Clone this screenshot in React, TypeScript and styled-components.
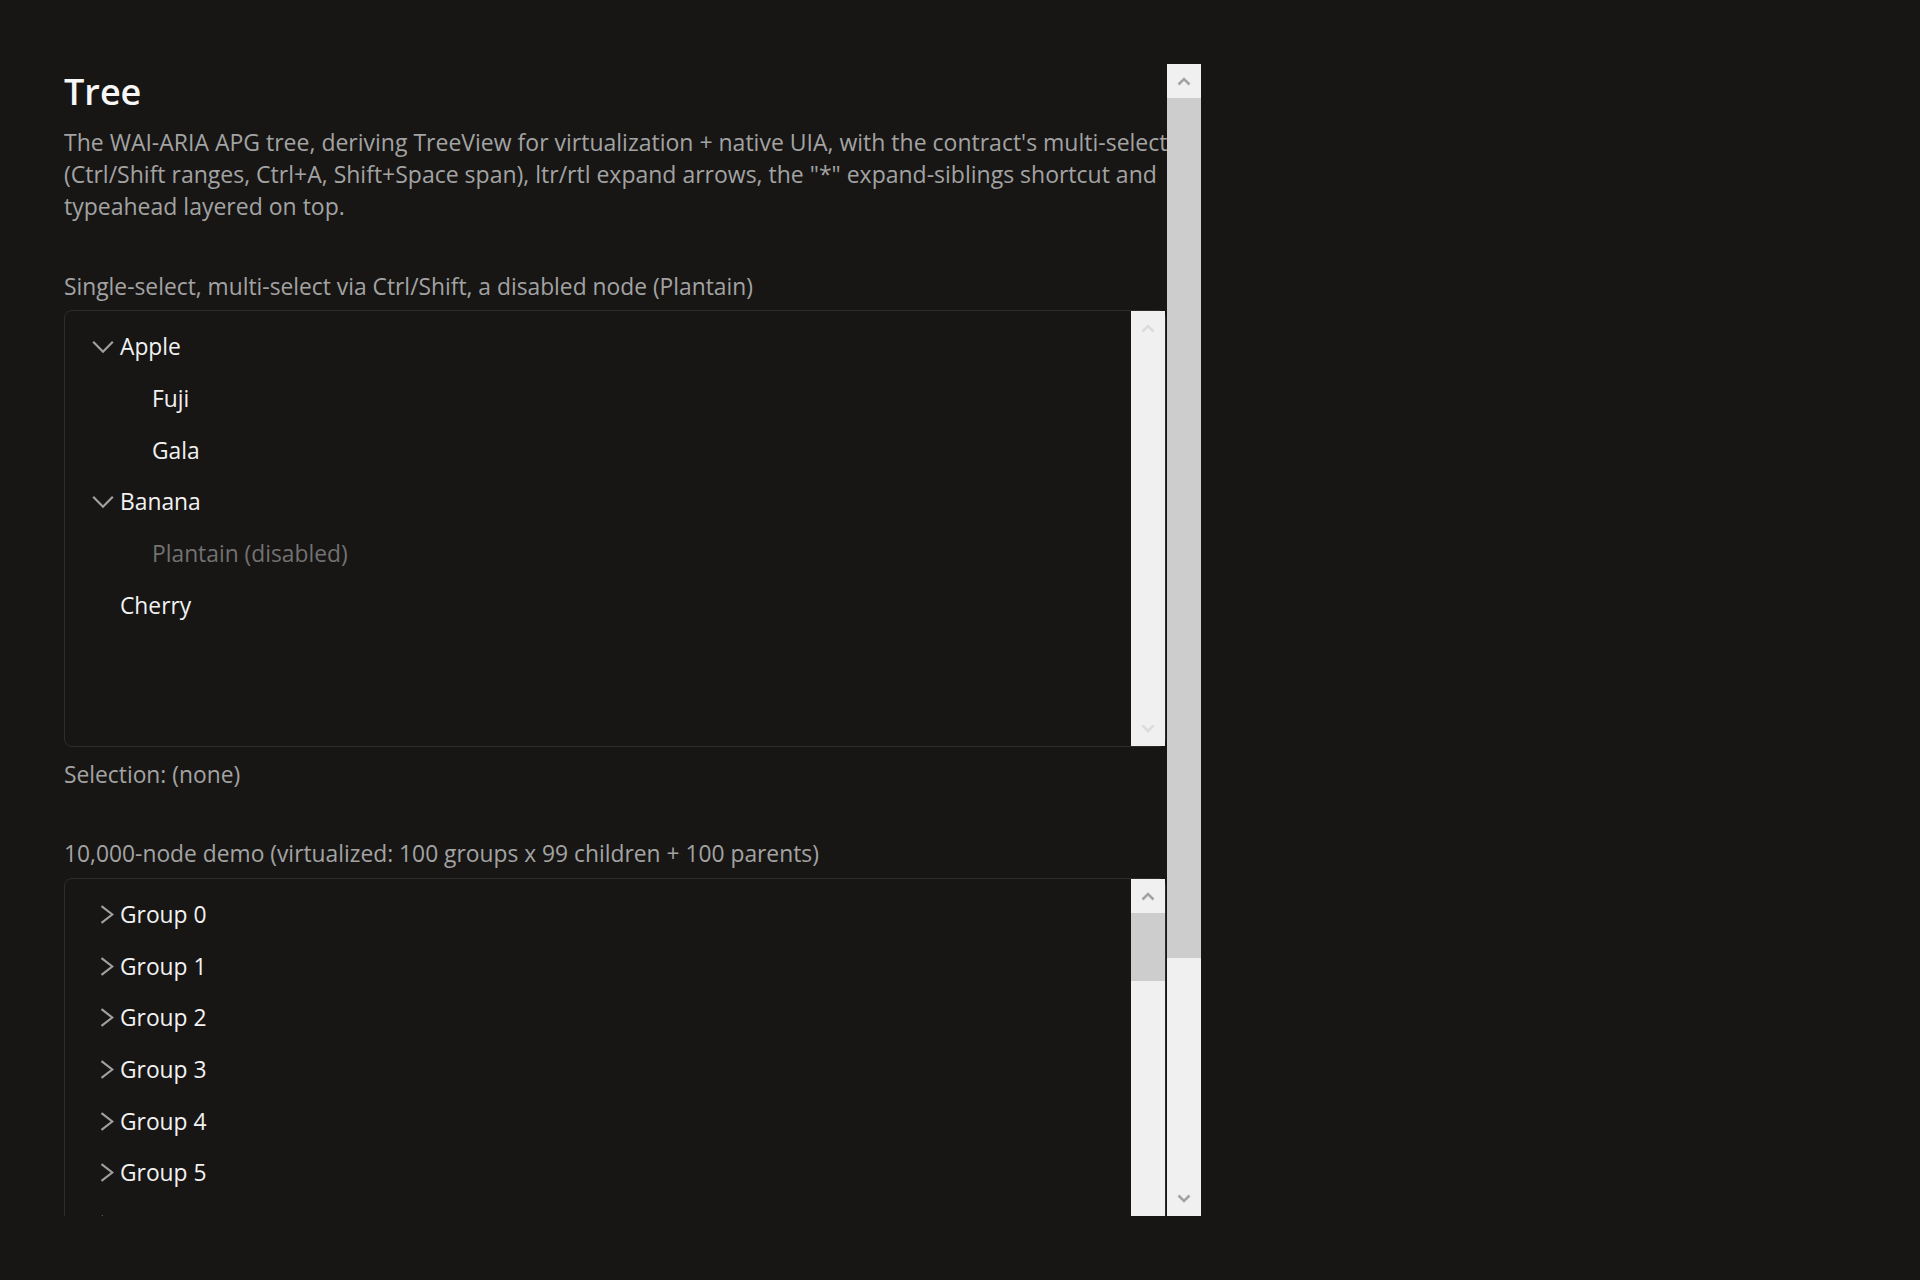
import React from "react";
import styled, { createGlobalStyle } from "styled-components";

const GlobalStyle = createGlobalStyle`
  html, body {
    margin: 0;
    padding: 0;
    background: #171614;
  }
  body {
    font-family: "Open Sans", "Noto Sans", sans-serif;
    color: #f2f2f2;
  }
  * { box-sizing: border-box; }
`;

const Page = styled.div`
  width: 1920px;
  height: 1280px;
  padding: 64px;
  background: #171614;
`;

const Viewport = styled.div`
  display: flex;
  width: 1137px;
  height: 1152px;
`;

const Content = styled.div`
  flex: 1;
  min-width: 0;
  overflow: hidden;
  display: flex;
  flex-direction: column;
  padding-top: 4px;
`;

const Title = styled.h1`
  margin: 0;
  font-size: 36px;
  line-height: 48px;
  font-weight: 600;
  color: #f7f7f7;
`;

const Description = styled.p`
  margin: 10px 0 0;
  font-size: 23px;
  line-height: 32px;
  color: #a3a3a3;
  white-space: nowrap;
`;

const Section = styled.section<{ $top: number }>`
  margin-top: ${(p) => p.$top}px;
  display: flex;
  flex-direction: column;
`;

const Caption = styled.div<{ $after?: number }>`
  font-size: 22.8px;
  line-height: 32px;
  color: #a3a3a3;
  white-space: nowrap;
  margin-bottom: ${(p) => p.$after ?? 0}px;
`;

const SelectionNote = styled(Caption)`
  margin-top: 11.3px;
`;

const TreeFrame = styled.div`
  display: flex;
  height: 437px;
  margin-right: 1px;
  border: 1px solid #2d2d2d;
  border-radius: 8px;
  flex-shrink: 0;
`;

const TreeList = styled.div`
  flex: 1;
  min-width: 0;
  overflow: hidden;
  padding-top: 9.5px;
`;

const Row = styled.div<{ $level: number; $disabled?: boolean }>`
  display: flex;
  align-items: center;
  height: 51.7px;
  padding-left: ${(p) => 24 + p.$level * 32}px;
  font-size: 22.8px;
  color: ${(p) => (p.$disabled ? "#727272" : "#f2f2f2")};
  white-space: nowrap;
`;

const ChevronSlot = styled.span`
  display: flex;
  align-items: center;
  justify-content: flex-end;
  width: 31px;
  padding-right: 6px;
  color: #a0a0a0;
  flex-shrink: 0;
`;

const Scrollbar = styled.div`
  width: 34px;
  flex-shrink: 0;
  display: flex;
  flex-direction: column;
  background: #f0f0f0;
`;

const ScrollButton = styled.div<{ $disabled?: boolean }>`
  height: 34px;
  flex-shrink: 0;
  display: flex;
  align-items: center;
  justify-content: center;
  color: ${(p) => (p.$disabled ? "#dcdcdc" : "#a3a3a3")};
`;

const Thumb = styled.div<{ $size: number }>`
  height: ${(p) => p.$size}px;
  flex-shrink: 0;
  background: #cdcdcd;
`;

const Track = styled.div`
  flex: 1;
`;

const ScrollArrow = ({ dir }: { dir: "up" | "down" }) => (
  <svg width="14" height="10" viewBox="0 0 14 10" fill="none">
    <polyline
      points={dir === "up" ? "1.5,8.5 7,3 12.5,8.5" : "1.5,1.5 7,7 12.5,1.5"}
      stroke="currentColor"
      strokeWidth="2.6"
      strokeLinejoin="miter"
    />
  </svg>
);

const ChevronDown = () => (
  <svg width="22" height="14" viewBox="0 0 22 14" fill="none">
    <polyline points="1.2,1.8 11,11.8 20.8,1.8" stroke="currentColor" strokeWidth="2.2" />
  </svg>
);

const ChevronRight = () => (
  <svg width="14" height="19" viewBox="0 0 14 19" fill="none">
    <polyline points="1.5,1.2 12.3,9.5 1.5,17.8" stroke="currentColor" strokeWidth="2.2" />
  </svg>
);

type Node = {
  label: string;
  level: number;
  expander?: "open" | "closed";
  disabled?: boolean;
};

const fruitNodes: Node[] = [
  { label: "Apple", level: 0, expander: "open" },
  { label: "Fuji", level: 1 },
  { label: "Gala", level: 1 },
  { label: "Banana", level: 0, expander: "open" },
  { label: "Plantain (disabled)", level: 1, disabled: true },
  { label: "Cherry", level: 0 },
];

const groupNodes: Node[] = Array.from({ length: 8 }, (_, i) => ({
  label: `Group ${i}`,
  level: 0,
  expander: "closed" as const,
}));

const TreeRows = ({ nodes }: { nodes: Node[] }) => (
  <TreeList role="tree">
    {nodes.map((n) => (
      <Row key={n.label} $level={n.level} $disabled={n.disabled} role="treeitem">
        <ChevronSlot>
          {n.expander === "open" && <ChevronDown />}
          {n.expander === "closed" && <ChevronRight />}
        </ChevronSlot>
        {n.label}
      </Row>
    ))}
  </TreeList>
);

export default function App() {
  return (
    <>
      <GlobalStyle />
      <Page>
        <Viewport>
          <Content>
            <Title>Tree</Title>
            <Description>
              The WAI-ARIA APG tree, deriving TreeView for virtualization + native UIA, with the contract's multi-select
              <br />
              (Ctrl/Shift ranges, Ctrl+A, Shift+Space span), ltr/rtl expand arrows, the "*" expand-siblings shortcut and
              <br />
              typeahead layered on top.
            </Description>

            <Section $top={49.4}>
              <Caption $after={7}>Single-select, multi-select via Ctrl/Shift, a disabled node (Plantain)</Caption>
              <TreeFrame>
                <TreeRows nodes={fruitNodes} />
                <Scrollbar>
                  <ScrollButton $disabled>
                    <ScrollArrow dir="up" />
                  </ScrollButton>
                  <Track />
                  <ScrollButton $disabled>
                    <ScrollArrow dir="down" />
                  </ScrollButton>
                </Scrollbar>
              </TreeFrame>
              <SelectionNote>Selection: (none)</SelectionNote>
            </Section>

            <Section $top={47.4}>
              <Caption $after={7.9}>10,000-node demo (virtualized: 100 groups x 99 children + 100 parents)</Caption>
              <TreeFrame>
                <TreeRows nodes={groupNodes} />
                <Scrollbar>
                  <ScrollButton>
                    <ScrollArrow dir="up" />
                  </ScrollButton>
                  <Thumb $size={68} />
                  <Track />
                  <ScrollButton>
                    <ScrollArrow dir="down" />
                  </ScrollButton>
                </Scrollbar>
              </TreeFrame>
              <SelectionNote>Selection: (none)</SelectionNote>
            </Section>
          </Content>
          <Scrollbar>
            <ScrollButton>
              <ScrollArrow dir="up" />
            </ScrollButton>
            <Thumb $size={860} />
            <Track />
            <ScrollButton>
              <ScrollArrow dir="down" />
            </ScrollButton>
          </Scrollbar>
        </Viewport>
      </Page>
    </>
  );
}
